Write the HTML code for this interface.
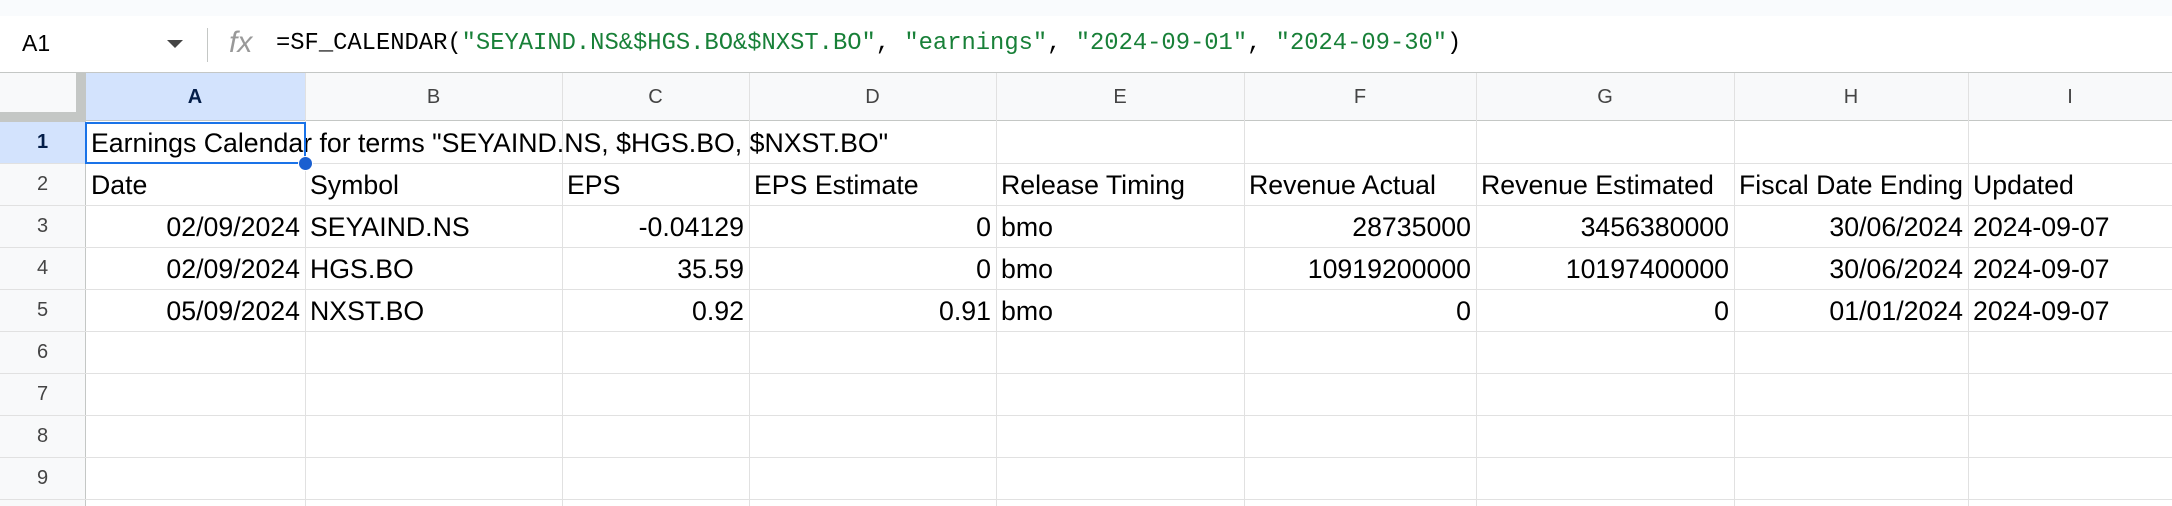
<!DOCTYPE html><html><head><meta charset="utf-8"><style>
*{margin:0;padding:0;box-sizing:border-box}
body{width:2172px;height:506px;overflow:hidden;background:#fff;font-family:"Liberation Sans",Arial,sans-serif;position:relative;color:#000}
.a{position:absolute}
.vl{position:absolute;width:1px;background:#e1e1e1;top:73px;height:433px}
.hl{position:absolute;height:1px;background:#e1e1e1;left:0;width:2172px}
.ch{position:absolute;top:73px;height:48px;line-height:48px;text-align:center;font-size:20px;color:#444}
.rh{position:absolute;left:0;width:85px;text-align:center;font-size:20px;color:#444;height:42px;line-height:42px}
.c{position:absolute;font-size:26.7px;height:42px;line-height:44px;white-space:nowrap;padding:0 5px}
.r{text-align:right}
.mono{font-family:"Liberation Mono",monospace}
</style></head><body>
<div class="a" style="left:0;top:0;width:2172px;height:16px;background:#f9fbfd"></div>
<div class="a" style="left:22px;top:28px;font-size:23px;line-height:30px">A1</div>
<div class="a" style="left:167px;top:40px;width:0;height:0;border-left:8px solid transparent;border-right:8px solid transparent;border-top:8px solid #444"></div>
<div class="a" style="left:207px;top:28px;width:1px;height:34px;background:#c4c7c5"></div>
<div class="a" style="left:229px;top:27px;font-family:'Liberation Sans',sans-serif;font-style:italic;font-size:30px;color:#999;line-height:32px">fx</div>
<div class="a mono" style="left:276px;top:29px;font-size:23.8px;line-height:30px;white-space:nowrap">=SF_CALENDAR(<span style="color:#188038">"SEYAIND.NS&amp;$HGS.BO&amp;$NXST.BO"</span>, <span style="color:#188038">"earnings"</span>, <span style="color:#188038">"2024-09-01"</span>, <span style="color:#188038">"2024-09-30"</span>)</div>
<div class="a" style="left:0;top:72px;width:2172px;height:49px;background:#f8f9fa;border-top:1px solid #c4c7c5;border-bottom:1px solid #c4c7c5"></div>
<div class="a" style="left:85px;top:73px;width:220px;height:47px;background:#d3e3fd"></div>
<div class="a" style="left:0;top:121px;width:85px;height:42px;background:#d3e3fd"></div>
<div class="a" style="left:0;top:163px;width:85px;height:343px;background:#f8f9fa"></div>
<div class="a" style="left:76px;top:73px;width:9px;height:48px;background:#c4c7c5"></div>
<div class="a" style="left:0;top:112px;width:85px;height:9px;background:#c4c7c5"></div>
<div class="a" style="left:85px;top:73px;width:1px;height:433px;background:#c4c7c5"></div>
<div class="vl" style="left:305px"></div><div class="vl" style="left:562px"></div><div class="vl" style="left:749px"></div><div class="vl" style="left:996px"></div><div class="vl" style="left:1244px"></div><div class="vl" style="left:1476px"></div><div class="vl" style="left:1734px"></div><div class="vl" style="left:1968px"></div>
<div class="hl" style="top:163px"></div><div class="hl" style="top:205px"></div><div class="hl" style="top:247px"></div><div class="hl" style="top:289px"></div><div class="hl" style="top:331px"></div><div class="hl" style="top:373px"></div><div class="hl" style="top:415px"></div><div class="hl" style="top:457px"></div><div class="hl" style="top:499px"></div>
<div class="a" style="left:0;top:121px;width:85px;height:1px;background:#c4c7c5"></div>
<div class="ch" style="left:85px;width:220px;color:#041e49;font-weight:bold">A</div>
<div class="ch" style="left:305px;width:257px">B</div><div class="ch" style="left:562px;width:187px">C</div><div class="ch" style="left:749px;width:247px">D</div><div class="ch" style="left:996px;width:248px">E</div><div class="ch" style="left:1244px;width:232px">F</div><div class="ch" style="left:1476px;width:258px">G</div><div class="ch" style="left:1734px;width:234px">H</div><div class="ch" style="left:1968px;width:204px">I</div>
<div class="rh" style="top:121px;color:#041e49;font-weight:bold">1</div><div class="rh" style="top:163px">2</div><div class="rh" style="top:205px">3</div><div class="rh" style="top:247px">4</div><div class="rh" style="top:289px">5</div><div class="rh" style="top:331px">6</div><div class="rh" style="top:373px">7</div><div class="rh" style="top:415px">8</div><div class="rh" style="top:457px">9</div>
<div class="c" style="left:86px;top:121px">Earnings Calendar for terms "SEYAIND.NS, $HGS.BO, $NXST.BO"</div>
<div class="a" style="left:85px;top:122px;width:221px;height:42px;border:2px solid #1a73e8"></div>
<div class="a" style="left:298px;top:156px;width:15px;height:15px;border-radius:50%;background:#1a5fd0;border:1px solid #fff"></div>
<div class="c" style="left:86px;top:163px">Date</div><div class="c" style="left:305px;top:163px">Symbol</div><div class="c" style="left:562px;top:163px">EPS</div><div class="c" style="left:749px;top:163px">EPS Estimate</div><div class="c" style="left:996px;top:163px">Release Timing</div><div class="c" style="left:1244px;top:163px">Revenue Actual</div><div class="c" style="left:1476px;top:163px">Revenue Estimated</div><div class="c" style="left:1734px;top:163px">Fiscal Date Ending</div><div class="c" style="left:1968px;top:163px">Updated</div>
<div class="c r" style="left:85px;width:220px;top:205px">02/09/2024</div><div class="c" style="left:305px;top:205px">SEYAIND.NS</div><div class="c r" style="left:562px;width:187px;top:205px">-0.04129</div><div class="c r" style="left:749px;width:247px;top:205px">0</div><div class="c" style="left:996px;top:205px">bmo</div><div class="c r" style="left:1244px;width:232px;top:205px">28735000</div><div class="c r" style="left:1476px;width:258px;top:205px">3456380000</div><div class="c r" style="left:1734px;width:234px;top:205px">30/06/2024</div><div class="c" style="left:1968px;top:205px">2024-09-07</div>
<div class="c r" style="left:85px;width:220px;top:247px">02/09/2024</div><div class="c" style="left:305px;top:247px">HGS.BO</div><div class="c r" style="left:562px;width:187px;top:247px">35.59</div><div class="c r" style="left:749px;width:247px;top:247px">0</div><div class="c" style="left:996px;top:247px">bmo</div><div class="c r" style="left:1244px;width:232px;top:247px">10919200000</div><div class="c r" style="left:1476px;width:258px;top:247px">10197400000</div><div class="c r" style="left:1734px;width:234px;top:247px">30/06/2024</div><div class="c" style="left:1968px;top:247px">2024-09-07</div>
<div class="c r" style="left:85px;width:220px;top:289px">05/09/2024</div><div class="c" style="left:305px;top:289px">NXST.BO</div><div class="c r" style="left:562px;width:187px;top:289px">0.92</div><div class="c r" style="left:749px;width:247px;top:289px">0.91</div><div class="c" style="left:996px;top:289px">bmo</div><div class="c r" style="left:1244px;width:232px;top:289px">0</div><div class="c r" style="left:1476px;width:258px;top:289px">0</div><div class="c r" style="left:1734px;width:234px;top:289px">01/01/2024</div><div class="c" style="left:1968px;top:289px">2024-09-07</div>
</body></html>
